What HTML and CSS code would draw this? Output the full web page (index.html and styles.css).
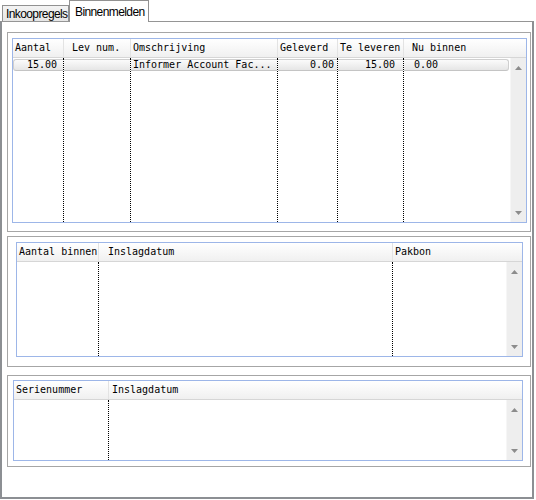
FILE: index.html
```html
<!DOCTYPE html>
<html>
<head>
<meta charset="utf-8">
<link rel="stylesheet" href="styles.css">
</head>
<body>
<div class="tabs">
  <div class="tab">Inkoopregels</div>
  <div class="tab active">Binnenmelden</div>
</div>
<div class="panel">
  <div class="group g1">
    <div class="list list1">
      <div class="lhead">
        <div class="hc a1">Aantal</div>
        <div class="hc a2 pl8">Lev num.</div>
        <div class="hc a3">Omschrijving</div>
        <div class="hc a4">Geleverd</div>
        <div class="hc a5">Te leveren</div>
        <div class="hc last pl8">Nu binnen</div>
      </div>
      <div class="lbody">
        <div class="cols">
          <div class="col a1"><div class="cell first r6">15.00</div></div>
          <div class="col a2"><div class="cell"></div></div>
          <div class="col a3"><div class="cell tl2">Informer Account Fac...</div></div>
          <div class="col a4"><div class="cell r3">0.00</div></div>
          <div class="col a5"><div class="cell r8">15.00</div></div>
          <div class="col last"><div class="cell end tl10">0.00</div></div>
        </div>
        <div class="sbar">
          <svg width="7" height="4" viewBox="0 0 7 4"><polygon points="3.5,0 7,4 0,4" fill="#8c8c8c"/></svg>
          <svg width="7" height="4" viewBox="0 0 7 4"><polygon points="0,0 7,0 3.5,4" fill="#8c8c8c"/></svg>
        </div>
      </div>
    </div>
  </div>
  <div class="group g2">
    <div class="list list2">
      <div class="lhead">
        <div class="hc b1">Aantal binnen</div>
        <div class="hc b2 pl9">Inslagdatum</div>
        <div class="hc last">Pakbon</div>
      </div>
      <div class="lbody">
        <div class="cols">
          <div class="col b1"></div>
          <div class="col b2"></div>
          <div class="col last"></div>
        </div>
        <div class="sbar">
          <svg width="7" height="4" viewBox="0 0 7 4"><polygon points="3.5,0 7,4 0,4" fill="#8c8c8c"/></svg>
          <svg width="7" height="4" viewBox="0 0 7 4"><polygon points="0,0 7,0 3.5,4" fill="#8c8c8c"/></svg>
        </div>
      </div>
    </div>
  </div>
  <div class="group g3">
    <div class="list list3">
      <div class="lhead">
        <div class="hc c1">Serienummer</div>
        <div class="hc last pl3">Inslagdatum</div>
      </div>
      <div class="lbody">
        <div class="cols">
          <div class="col c1"></div>
          <div class="col last"></div>
        </div>
        <div class="sbar">
          <svg width="7" height="4" viewBox="0 0 7 4"><polygon points="3.5,0 7,4 0,4" fill="#8c8c8c"/></svg>
          <svg width="7" height="4" viewBox="0 0 7 4"><polygon points="0,0 7,0 3.5,4" fill="#8c8c8c"/></svg>
        </div>
      </div>
    </div>
  </div>
</div>
</body>
</html>
```
FILE: styles.css
```css
* { box-sizing: border-box; }
html, body { margin: 0; padding: 0; background: #fff; }
body { width: 536px; height: 500px; overflow: hidden; color: #000; }

.tabs {
  height: 21px;
  display: flex;
  align-items: flex-end;
  padding-left: 2px;
}
.tab {
  font-family: "Liberation Sans", Arial, sans-serif;
  font-size: 12px;
  letter-spacing: -0.6px;
  line-height: 14px;
  height: 16px;
  width: 67px;
  padding: 1px 0 0 3px;
  border: 1px solid #919191;
  border-bottom: none;
  background: linear-gradient(#f3f3f3, #e6e6e6);
  white-space: nowrap;
  overflow: hidden;
}
.tab.active {
  height: 22px;
  width: 80px;
  padding: 4px 0 0 5px;
  margin-bottom: -1px;
  background: #fff;
  position: relative;
  z-index: 1;
}

.panel {
  width: 534px;
  height: 478px;
  border-top: 1px solid #959595;
  border-left: 2px solid #8c8f93;
  border-right: 2px solid #8c8f93;
  border-bottom: 2px solid #8c8f93;
  display: flex;
  flex-direction: column;
}

.group {
  margin-left: 5px;
  width: 524px;
  border: 1px solid #a6a6a6;
}
.g1 { margin-top: 10px; height: 200px; padding: 5px 0 0 4px; }
.g2 { margin-top: 4px; height: 131px; padding: 5px 0 0 8px; }
.g3 { margin-top: 8px; height: 92px; padding: 4px 0 0 5px; }

.list {
  border: 1px solid #9db6e8;
  display: flex;
  flex-direction: column;
  font-family: "DejaVu Sans Mono", monospace;
  font-size: 10px;
  background: #fff;
}
.list1 { width: 515px; height: 185px; }
.list2 { width: 507px; height: 115px; }
.list3 { width: 510px; height: 81px; }

.lhead {
  height: 19px;
  display: flex;
  background: linear-gradient(#ffffff, #f0f0f0);
  border-bottom: 1px solid #d6d6d6;
  flex: none;
}
.hc {
  height: 18px;
  line-height: 18px;
  padding-left: 2px;
  border-right: 1px solid #e3e3e3;
  white-space: nowrap;
  overflow: hidden;
}
.hc.last { flex: 1; border-right: none; }
.pl8 { padding-left: 8px; }
.pl9 { padding-left: 9px; }
.pl3 { padding-left: 3px; }

.lbody {
  flex: 1;
  display: flex;
  min-height: 0;
}
.cols {
  flex: 1;
  display: flex;
  min-width: 0;
}
.col {
  flex: none;
  border-right: 1px dotted #000;
  padding-top: 1px;
}
.col.last { flex: 1; border-right: none; min-width: 0; }

.a1 { width: 51px; }
.a2 { width: 67px; }
.a3 { width: 147px; }
.a4 { width: 60px; }
.a5 { width: 66px; }
.b1 { width: 82px; }
.b2 { width: 294px; }
.c1 { width: 95px; }

.cell {
  height: 12px;
  line-height: 10px;
  border-top: 1px solid #cfcfcf;
  border-bottom: 1px solid #c4c4c4;
  background: linear-gradient(#fbfbfb, #e6e6e6);
  white-space: nowrap;
  overflow: hidden;
}
.cell.first { border-left: 1px solid #cfcfcf; border-radius: 3px 0 0 3px; }
.cell.end { border-right: 1px solid #cfcfcf; border-radius: 0 3px 3px 0; margin-right: 1px; }
.r6 { text-align: right; padding-right: 6px; }
.r3 { text-align: right; padding-right: 3px; }
.r8 { text-align: right; padding-right: 8px; }
.tl2 { padding-left: 2px; }
.tl10 { padding-left: 10px; }

.sbar {
  width: 16px;
  flex: none;
  background: #eeeeee;
  border-left: 1px solid #f6f6f6;
  display: flex;
  flex-direction: column;
  justify-content: space-between;
  align-items: center;
  padding: 8px 0 7px;
}
.sbar svg { display: block; }
```
